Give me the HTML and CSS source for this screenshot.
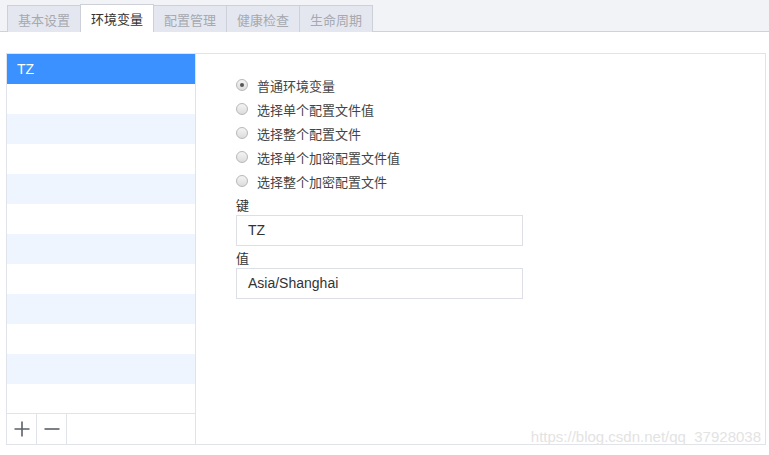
FILE: index.html
```html
<!DOCTYPE html>
<html>
<head>
<meta charset="utf-8">
<link rel="stylesheet" href="styles.css">
</head>
<body>
<div class="tabbar">
  <div class="tab">基本设置</div>
  <div class="tab active">环境变量</div>
  <div class="tab">配置管理</div>
  <div class="tab">健康检查</div>
  <div class="tab">生命周期</div>
</div>
<div class="panel">
  <div class="side">
    <div class="list">
      <div class="row sel">TZ</div>
      <div class="row"></div>
      <div class="row alt"></div>
      <div class="row"></div>
      <div class="row alt"></div>
      <div class="row"></div>
      <div class="row alt"></div>
      <div class="row"></div>
      <div class="row alt"></div>
      <div class="row"></div>
      <div class="row alt"></div>
      <div class="row"></div>
    </div>
    <div class="tools">
      <div class="btn"><svg width="16" height="16" viewBox="0 0 16 16"><path d="M8 0.5V15.5M0.5 8H15.5" stroke="#5b6069" stroke-width="1.6" fill="none"/></svg></div>
      <div class="btn"><svg width="16" height="16" viewBox="0 0 16 16"><path d="M0.5 8H15.5" stroke="#5b6069" stroke-width="1.6" fill="none"/></svg></div>
    </div>
  </div>
  <div class="main">
    <div class="radios">
      <div class="opt"><span class="radio on"></span>普通环境变量</div>
      <div class="opt"><span class="radio"></span>选择单个配置文件值</div>
      <div class="opt"><span class="radio"></span>选择整个配置文件</div>
      <div class="opt"><span class="radio"></span>选择单个加密配置文件值</div>
      <div class="opt"><span class="radio"></span>选择整个加密配置文件</div>
    </div>
    <div class="label">键</div>
    <div class="input">TZ</div>
    <div class="label">值</div>
    <div class="input">Asia/Shanghai</div>
    <div class="mark">https://blog.csdn.net/qq_37928038</div>
  </div>
</div>
</body>
</html>
```
FILE: styles.css
```css
html, body {
  margin: 0;
  padding: 0;
  background: #fff;
  font-family: "Microsoft YaHei", "Liberation Sans", Arial, "Noto Sans CJK SC", sans-serif;
  font-size: 13px;
  color: #333;
}
.tabbar {
  height: 31px;
  background: #f2f3f7;
  border-bottom: 1px solid #cfd2d9;
  display: flex;
  align-items: flex-end;
  padding-left: 7px;
  box-sizing: content-box;
}
.tab {
  width: 72px;
  height: 26px;
  border: 1px solid #cdd0d8;
  border-bottom: none;
  margin-right: -1px;
  background: #e4e7ef;
  color: #a6a9b0;
  font-size: 13px;
  display: flex;
  align-items: center;
  justify-content: center;
  margin-bottom: -1px;
}
.tab.active {
  background: #fff;
  color: #333;
  height: 27px;
  position: relative;
  z-index: 1;
}
.panel {
  margin: 21px 3px 0 6px;
  height: 390px;
  border: 1px solid #e1e3ea;
  display: flex;
}
.side {
  width: 188px;
  border-right: 1px solid #e1e3ea;
  display: flex;
  flex-direction: column;
}
.list {
  flex: 1;
  overflow: hidden;
}
.row {
  height: 30px;
}
.row.alt {
  background: #eef5ff;
}
.row.sel {
  background: #3a91ff;
  color: #fff;
  font-size: 14px;
  line-height: 30px;
  padding-left: 10px;
}
.tools {
  height: 30px;
  border-top: 1px solid #e1e3ea;
  display: flex;
}
.btn {
  width: 29px;
  border-right: 1px solid #e1e3ea;
  display: flex;
  align-items: center;
  justify-content: center;
}
.main {
  flex: 1;
  padding: 19px 0 0 40px;
  position: relative;
}
.radios {
  display: flex;
  flex-direction: column;
}
.opt {
  height: 24px;
  display: flex;
  align-items: center;
  color: #444;
  font-size: 13px;
}
.radio {
  width: 10px;
  height: 10px;
  border-radius: 50%;
  border: 1px solid #b8b8b8;
  background: linear-gradient(#f4f4f4, #dcdcdc);
  margin-right: 9px;
  position: relative;
}
.radio.on::after {
  content: "";
  position: absolute;
  left: 3px;
  top: 3px;
  width: 4px;
  height: 4px;
  border-radius: 50%;
  background: #555;
}
.label {
  margin-top: 4px;
  height: 18px;
  line-height: 18px;
  color: #333;
}
.input {
  width: 274px;
  height: 29px;
  border: 1px solid #dcdfe6;
  line-height: 29px;
  padding-left: 11px;
  font-size: 14px;
  color: #333;
}
.mark {
  position: absolute;
  right: 4px;
  bottom: -1px;
  font-size: 15px;
  color: #e3e3e3;
  font-family: "Liberation Sans", Arial, sans-serif;
}
```
